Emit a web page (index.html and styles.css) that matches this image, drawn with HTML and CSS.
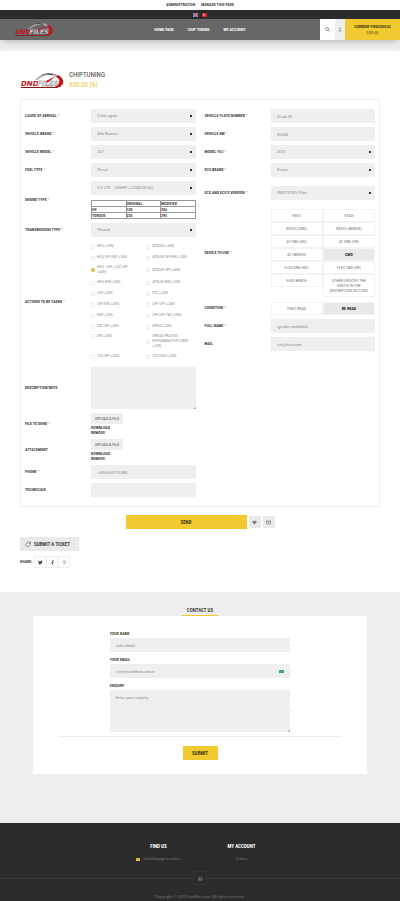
FILE: index.html
```html
<!DOCTYPE html>
<html lang="en">
<head>
<meta charset="utf-8">
<meta name="viewport" content="width=device-width, initial-scale=1">
<title>Chiptuning</title>
<link rel="stylesheet" href="styles.css">
</head>
<body>
<nav class="admin">
  <a href="#">Administration</a>
  <a href="#">Manage this page</a>
</nav>
<div class="langs">
  <a href="#" aria-label="English"><svg width="5" height="4" viewBox="0 0 5 4"><path fill="#4a5a92" d="M0 0h5v4H0z"/><path d="M0 0l5 4M5 0 0 4" stroke="#ddd" stroke-width=".7"/><path d="M2.500 0v4M0 2h5" stroke="#d66" stroke-width=".8"/></svg></a>
  <a href="#" aria-label="Turkish"><svg width="5" height="4" viewBox="0 0 5 4"><path fill="#d8232a" d="M0 0h5v4H0z"/><circle cx="2" cy="2" r=".9" fill="#f5c5c5"/><circle cx="2.400" cy="2" r=".6" fill="#d8232a"/></svg></a>
</div>
<header class="header">
  <a class="brand" href="#" aria-label="Home">
    <svg width="40" height="15" viewBox="0 0 44 17">
      <path d="M15 8C19 4 24 1 29 1c7 0 11 3 13 7l-2 1c-2-4-6-6-11-6-4 0-8 2-12 5z" fill="#aaa"/>
      <path d="M20 4c4-3 9-3 13-2l-1 1c-4-1-8-1-12 1z" fill="#333"/>
      <path d="M38 3c4 2 6 5 5 9l-3 3h-5l4-4c1-3 0-5-3-6z" fill="#c4161c"/>
      <path d="m24 10 12-6-9 7z" fill="#c4161c"/>
      <path d="M1 15h38l-2 1H1z" fill="#8c1216"/>
      <text x="1" y="14" class="logo-a">DND</text>
      <text x="17" y="14" class="logo-b">FILES</text>
    </svg>
  </a>
  <nav class="menu">
    <a href="#">Home page</a>
    <a href="#">Chip Tuning</a>
    <a href="#">My account</a>
  </nav>
  <div class="tools">
    <button class="search" aria-label="Search"><svg width="5" height="5" viewBox="0 0 10 10" fill="none" stroke="#666" stroke-width="1.300"><circle cx="4" cy="4" r="3"/><path d="m6.500 6.500 3 3"/></svg></button>
    <button class="user" aria-label="Account"><svg width="4" height="5" viewBox="0 0 8 10" fill="#999"><circle cx="4" cy="3" r="2"/><path d="M1 9c0-4 6-4 6 0z"/></svg></button>
    <a class="process" href="#"><b>Current process(0)</b><span>0,00 (₺)</span></a>
  </div>
</header>

<main>
  <div class="product">
    <svg width="44" height="17" viewBox="0 0 44 17">
      <path d="M15 8C19 4 24 1 29 1c7 0 11 3 13 7l-2 1c-2-4-6-6-11-6-4 0-8 2-12 5z" fill="#aaa"/>
      <path d="M20 4c4-3 9-3 13-2l-1 1c-4-1-8-1-12 1z" fill="#333"/>
      <path d="M38 3c4 2 6 5 5 9l-3 3h-5l4-4c1-3 0-5-3-6z" fill="#c4161c"/>
      <path d="m24 10 12-6-9 7z" fill="#c4161c"/>
      <path d="M1 15h38l-2 1H1z" fill="#8c1216"/>
      <text x="1" y="14" class="logo-a">DND</text>
      <text x="17" y="14" class="logo-b">FILES</text>
    </svg>
    <div>
      <h1>Chiptuning</h1>
      <p class="price">600.00 (₺)</p>
    </div>
  </div>

  <form class="box">
    <div class="col">
      <div class="row"><label for="cause">Cause of arrival <i>*</i></label><select id="cause"><option>Came again</option></select></div>
      <div class="row"><label for="brand">Vehicle brand <i>*</i></label><select id="brand"><option>Alfa Romeo</option></select></div>
      <div class="row"><label for="model">Vehicle model <i>*</i></label><select id="model"><option>147</option></select></div>
      <div class="row"><label for="fuel">Fuel type <i>*</i></label><select id="fuel"><option>Diesel</option></select></div>
      <div class="row"><label for="engine">Engine type <i>*</i></label>
        <div class="engine">
          <select id="engine"><option>1.9 JTD - 100HP [+3,000.00 (₺)]</option></select>
          <table>
            <tr><th></th><th>Original</th><th>Modified</th></tr>
            <tr><th>HP</th><td>100</td><td>206</td></tr>
            <tr><th>Torque</th><td>225</td><td>295</td></tr>
          </table>
        </div>
      </div>
      <div class="row"><label for="trans">Transmission type <i>*</i></label><select id="trans"><option>Manual</option></select></div>
      <div class="row"><span class="name">Actions to be taken <i>*</i></span>
        <div class="checks">
          <label><input type="checkbox">HGO (+20%)</label><label><input type="checkbox">ADBLUE (+20%)</label>
          <label><input type="checkbox">HGO OFF EGR (+30%)</label><label><input type="checkbox">ADBLUE OFF EGR (+30%)</label>
          <label><input type="checkbox" checked>HGO - OFF + CAT OFF (+40%)</label><label><input type="checkbox">ADBLUE OFF (+40%)</label>
          <label><input type="checkbox">HGO EGR (+20%)</label><label><input type="checkbox">ADBLUE EGR (+30%)</label>
          <label><input type="checkbox">OFF (+10%)</label><label><input type="checkbox">DTC (+10%)</label>
          <label><input type="checkbox">OFF EGR (+20%)</label><label><input type="checkbox">OFF-OFF (+20%)</label>
          <label><input type="checkbox">EGR (+10%)</label><label><input type="checkbox">OFF-OFF-CAT (+30%)</label>
          <label><input type="checkbox">CAT OFF (+20%)</label><label><input type="checkbox">SPEED (+10%)</label>
          <label class="top"><input type="checkbox">DRI (+10%)</label><label><input type="checkbox">SPECIAL PROCESS (POPS&amp;BANG POP CORN) (+20%)</label>
          <label><input type="checkbox">TCU OFF (+20%)</label><label><input type="checkbox">TCU MOD (+30%)</label>
        </div>
      </div>
      <div class="row"><label for="note">Description/note</label><textarea id="note"></textarea></div>
      <div class="row"><span class="name">File to send <i>*</i></span><div class="file"><button type="button">Upload a file</button><a href="#">Download</a><a href="#">Remove</a></div></div>
      <div class="row"><span class="name">Attachment</span><div class="file"><button type="button">Upload a file</button><a href="#">Download</a><a href="#">Remove</a></div></div>
      <div class="row"><label for="phone">Phone <i>*</i></label><input id="phone" type="text" value="+905454729388"></div>
      <div class="row"><label for="tech">Technician</label><input id="tech" type="text"></div>
    </div>

    <div class="col">
      <div class="row"><label for="plate">Vehicle plate number <i>*</i></label><input id="plate" type="text" value="01ade25"></div>
      <div class="row"><label for="km">Vehicle km <i>*</i></label><input id="km" type="text" value="25000"></div>
      <div class="row"><label for="year">Model yili <i>*</i></label><select id="year"><option>2015</option></select></div>
      <div class="row"><label for="ecu">Ecu brand <i>*</i></label><select id="ecu"><option>Denso</option></select></div>
      <div class="row version"><label for="ver">Ecu and ecu's version <i>*</i></label><select id="ver"><option>MB279700-93xx</option></select></div>
      <div class="row"><span class="name">Device to use <i>*</i></span>
        <div class="cells">
          <label><input type="radio" name="dev">KESS</label><label><input type="radio" name="dev">KTAG</label>
          <label><input type="radio" name="dev">KESS3 (OBD)</label><label><input type="radio" name="dev">KESS3 (BENCH)</label>
          <label><input type="radio" name="dev">AT OBD (HD)</label><label><input type="radio" name="dev">AT OBD (VR)</label>
          <label><input type="radio" name="dev">AT (BENCH)</label><label><input type="radio" name="dev" checked>CMD</label>
          <label><input type="radio" name="dev">FLEX OBD (HD)</label><label><input type="radio" name="dev">FLEX OBD (VR)</label>
          <label class="top"><input type="radio" name="dev">FLEX BENCH</label><label><input type="radio" name="dev">OTHER (SPECIFY THE DEVICE IN THE DESCRIPTION SECTION)</label>
        </div>
      </div>
      <div class="row"><span class="name">Condition <i>*</i></span>
        <div class="cells"><label><input type="radio" name="cond">FIRST READ</label><label><input type="radio" name="cond" checked>RE-READ</label></div>
      </div>
      <div class="row"><label for="full">Full name <i>*</i></label><input id="full" class="misspelt" type="text" value="cgenker mdebdisk"></div>
      <div class="row"><label for="mail">Mail</label><input id="mail" type="text" value="test@test.com"></div>
    </div>
  </form>

  <div class="send">
    <button class="primary">Send</button>
    <button class="small" aria-label="Add to wishlist"><svg width="5" height="5" viewBox="0 0 10 10" fill="#777"><path d="M5 9 1 4.500C0 2 3 0 5 2.500 7 0 10 2 9 4.500z"/></svg></button>
    <button class="small" aria-label="Email a friend"><svg width="5" height="5" viewBox="0 0 10 10" fill="none" stroke="#777" stroke-width="1.300"><path d="M1 2h8v6H1zl4 3 4-3"/></svg></button>
  </div>

  <button class="ticket"><svg width="6" height="6" viewBox="0 0 12 12" fill="none" stroke="#666" stroke-width="1.300"><path d="M1 7 6 2h5v5l-4 4H3z"/><circle cx="8.500" cy="4.500" r=".6"/></svg>Submit a ticket</button>

  <div class="share">
    <span>Share:</span>
    <a href="#" aria-label="Twitter"><svg width="5" height="5" viewBox="0 0 10 10" fill="#444"><path d="M0 8.500c4 1.500 8-.5 8.500-5.500L10 1.500 8.500 2C7 0 4.500 1 5 3 3 3 2 2 1 1c-1 1.500 0 3 .5 3.500H.8C1 6 2 6.500 2.500 7 2 8 1 8.500 0 8.500z"/></svg></a>
    <a href="#" aria-label="Facebook"><svg width="5" height="5" viewBox="0 0 10 10" fill="#777"><path d="M4 10V6H2.500V4H4C4 1 5 0 7.500.3V2C6 2 6 2.500 6 4h1.500L7 6H6v4z"/></svg></a>
    <a href="#" aria-label="Pinterest"><svg width="5" height="5" viewBox="0 0 10 10" fill="none" stroke="#999" stroke-width="1.300"><path d="M3 6C1 3 3 1 5 1s4 2 2.500 4.500S5 6.500 5 6M5.200 3.500 4 9.500"/></svg></a>
  </div>
</main>

<section class="contact">
  <h2>Contact us</h2>
  <form class="card">
    <div class="fields">
      <label for="cname">Your name</label>
      <div class="field"><input id="cname" type="text" value="John Smith"><i>*</i></div>
      <label for="cemail">Your email</label>
      <div class="field"><input id="cemail" type="text" value="tr@mtr.wildtow.com.tr"><svg class="key" width="5" height="3"><path fill="#3fa58c" d="M0 0h5v3H0z"/></svg><i>*</i></div>
      <label for="cenq">Enquiry</label>
      <div class="field"><textarea id="cenq" placeholder="Enter your enquiry"></textarea><i>*</i></div>
    </div>
    <hr>
    <button class="primary">Submit</button>
  </form>
</section>

<footer>
  <div class="links">
    <div><h3>Find us</h3><a href="#"><svg width="4" height="3" viewBox="0 0 8 6"><path fill="#e9c832" d="M0 0h8v6H0z"/><path d="m0 1 4 3 4-3" stroke="#8a7820" fill="none" stroke-width=".7"/></svg>info@baspgrcu.online</a></div>
    <div><h3>My account</h3><a href="#">Orders</a></div>
  </div>
  <div class="feed"><a href="#" aria-label="RSS"><svg width="5" height="5" viewBox="0 0 10 10" fill="none" stroke="#999" stroke-width="1.500"><path d="M1 5a4 4 0 0 1 4 4M1 1.500A7.500 7.500 0 0 1 8.500 9"/><circle cx="2" cy="8" r=".6"/></svg></a></div>
  <p>Copyright © 2023 dndfiles.com. All rights reserved.</p>
</footer>
</body>
</html>
```
FILE: styles.css
```css
* { box-sizing: border-box; margin: 0; padding: 0; }

body {
  font: 4px/6px Lato, "Open Sans", sans-serif;
  color: #888;
  background: #fff;
}

a { color: inherit; text-decoration: none; }
button { border: 0; font: inherit; color: inherit; text-transform: uppercase; }
svg { display: block; flex: none; }
i { color: #777; font-style: normal; font-weight: 400; }

.admin, .menu, .process, h1, h2, h3, .price, .row > label, .name, table,
.file, .cells, .primary, .ticket, .share, .fields > label {
  font-family: "Roboto Condensed", Roboto, "Liberation Sans", sans-serif;
  font-weight: 700;
  text-transform: uppercase;
  color: #444;
}

.logo-a, .logo-b { font: italic 700 7px "DejaVu Sans", sans-serif; fill: #c4161c; }
.logo-b { fill: #eee; stroke: #555; stroke-width: .3px; }

/* Page top */
.admin { display: flex; justify-content: center; gap: 6px; height: 10px; line-height: 10px; }
.langs { display: flex; justify-content: center; align-items: center; gap: 4px; height: 9px; background: #2b2b2b; }
.header { display: flex; align-items: stretch; justify-content: space-between; height: 21px; background: #676767; box-shadow: 0 5px 6px -3px #bbb; position: relative; }
.brand { display: flex; align-items: center; flex: 1; }
.brand svg { margin-left: 14px; }
.menu { display: flex; align-items: center; gap: 14px; }
.menu a { color: #fff; }
.tools { display: flex; justify-content: flex-end; flex: 1; }
.tools button { display: flex; align-items: center; justify-content: center; }
.search { width: 15px; background: #fff; }
.user { width: 10px; background: #eee; }
.process { display: flex; flex-direction: column; justify-content: center; align-items: center; width: 55px; line-height: 6px; background: #f1ca2f; color: #544613; }
.process span { font-weight: 400; }

main { padding: 30px 20px 24px; box-shadow: inset 0 11px #eee; }

.product { display: flex; align-items: center; gap: 5px; margin-bottom: 9px; }
h1 { font-size: 7px; line-height: 10px; font-weight: 400; }
.price { font-size: 7px; line-height: 10px; font-weight: 400; color: #ebc52f; }

/* Order form */
.box { display: grid; grid-template-columns: 1fr 1fr; gap: 9px; align-items: start; padding: 9px 4px; border: 1px solid #eee; }
.col { display: grid; gap: 4px; }
.row { display: grid; grid-template-columns: 66px minmax(0, 1fr); align-items: center; }
.version { padding: 5px 0 4px; }

input[type="text"], select, textarea {
  display: block;
  width: 100%;
  height: 14px;
  padding: 0 6px;
  border: 0;
  border-radius: 0;
  outline: 0;
  background: #efefef;
  color: #8a8a8a;
  font: 4px/6px Lato, "Open Sans", sans-serif;
}
select {
  appearance: none;
  background: linear-gradient(#333, #333) right 4px center / 2px 2px no-repeat #efefef;
}
textarea {
  height: 42px;
  padding: 5px 6px;
  resize: none;
  background: linear-gradient(135deg, #efefef 50%, #aaa 50%) right bottom / 2px 2px no-repeat #efefef;
}
::placeholder { color: #888; }
.misspelt { text-decoration: underline; text-decoration-color: #d55; color: #a66; }

.engine { display: grid; gap: 5px; }
table { width: 100%; border-collapse: collapse; table-layout: fixed; }
th, td { height: 6px; border: 1px solid #999; text-align: left; line-height: 4px; font-weight: 700; }

.checks { display: grid; grid-template-columns: 1fr 1fr; gap: 4px 6px; padding: 2px 0 3px; font-size: 3px; line-height: 5px; }
.checks label { display: flex; align-items: center; gap: 2px; min-height: 7px; }
.checks label:nth-child(odd) { padding-right: 8px; }
.checks .top { align-items: flex-start; }
.checks input { appearance: none; flex: none; width: 4px; height: 4px; border: 1px solid #eee; background: #fff; }
.checks input:checked { background: #e0b93a; border-color: #ecd27a; }

.file { display: grid; justify-items: start; line-height: 5px; }
.file button { height: 11px; padding: 0 4px; margin-bottom: 1px; background: #eee; color: #555; font-weight: 400; }

.cells { display: grid; grid-template-columns: 1fr 1fr; padding: 1px 0 0; color: #777; text-align: center; line-height: 5px; font-weight: 400; }
.cells label { min-height: 13px; padding: 3px 4px; border: 1px solid #f3f3f3; }
.cells .top { align-self: start; }
.cells label:has(:checked) { background: #e9e9e9; color: #222; font-weight: 700; }
.cells input { appearance: none; position: absolute; }

/* Actions */
.primary { background: #f1ca2f; color: #4a3d10; font-size: 5px; }
.send { display: flex; align-items: center; justify-content: center; gap: 2px; margin-top: 8px; }
.send .primary { width: 121px; height: 14px; }
.small { display: grid; place-items: center; width: 12px; height: 12px; background: #e9e9e9; }
.ticket { display: flex; align-items: center; gap: 3px; height: 14px; margin-top: 8px; padding: 0 9px 0 5px; background: #e9e9e9; font-size: 5px; }
.share { display: flex; align-items: center; margin-top: 5px; }
.share span { margin-right: 2px; }
.share a { display: grid; place-items: center; width: 12px; height: 12px; border: 1px solid #f0f0f0; }

/* Contact */
.contact { padding: 14px 33px 49px; background: #eee; }
h2 { width: 36px; margin: 0 auto; border-bottom: 1px solid #f1ca2f; font-size: 5px; line-height: 9px; text-align: center; white-space: nowrap; }
.card { padding: 14px 26px; background: #fff; }
.fields { width: 64%; margin: 0 auto; }
.fields > label { display: block; line-height: 8px; }
.field { position: relative; margin-bottom: 4px; }
.field i { position: absolute; left: 100%; top: 50%; margin-left: 1px; line-height: 4px; color: #c88; }
.key { position: absolute; right: 6px; top: 6px; }
hr { border: 0; border-top: 1px solid #eee; }
.card .primary { display: block; width: 35px; height: 14px; margin: 9px auto 0; }

/* Footer */
footer { background: #2b2b2b; color: #777; text-align: center; padding-top: 19px; }
.links { display: flex; justify-content: center; gap: 36px; }
.links div { width: 47px; }
.links a { display: flex; align-items: center; justify-content: center; gap: 3px; margin-top: 6px; white-space: nowrap; }
h3 { color: #fff; font-size: 5px; line-height: 8px; }
.feed { display: flex; align-items: center; margin-top: 9px; }
.feed::before, .feed::after { content: ""; flex: 1; height: 1px; background: #383838; }
.feed a { display: grid; place-items: center; width: 14px; height: 14px; border: 1px solid #333; }
footer p { padding: 9px 0 2px; }
```
